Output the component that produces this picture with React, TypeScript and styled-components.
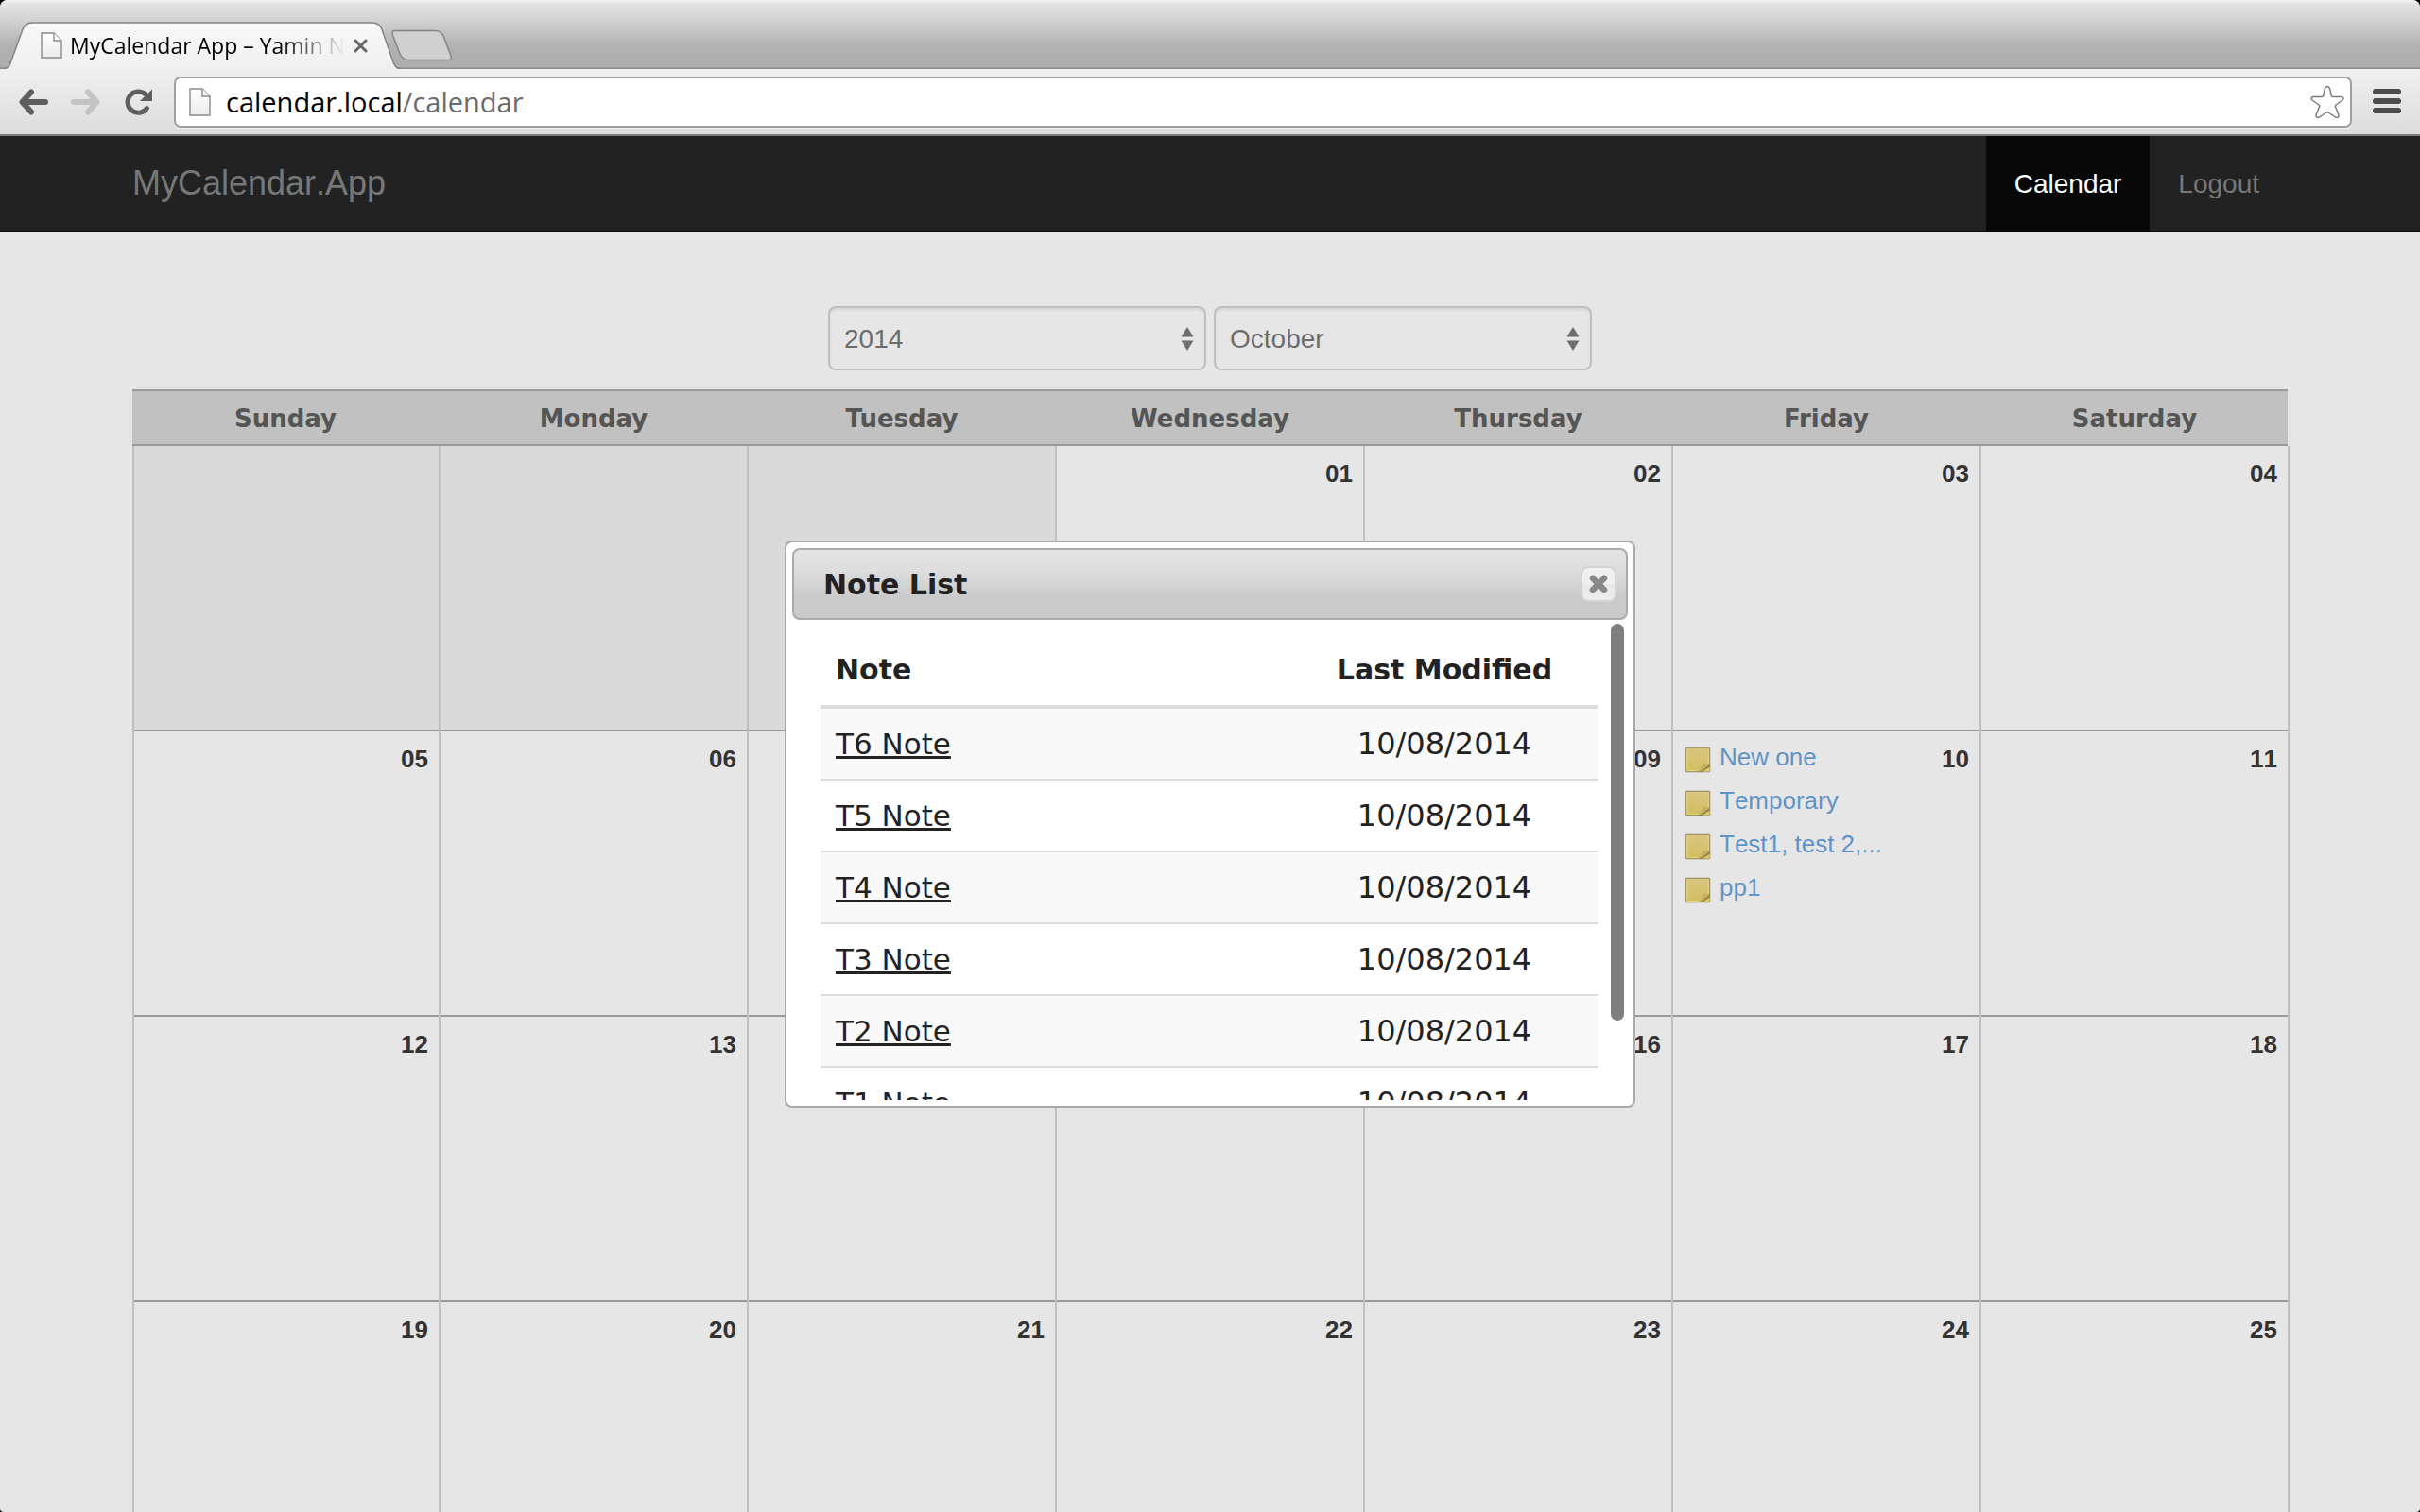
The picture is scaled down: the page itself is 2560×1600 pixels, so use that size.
import React from "react";
import styled, { createGlobalStyle } from "styled-components";

const GlobalStyle = createGlobalStyle`
  * { box-sizing: border-box; }
  html, body, #root { height: 100%; }
  body {
    margin: 0;
    background: #000;
    overflow: hidden;
    font-family: "Liberation Sans", Arial, sans-serif;
    font-kerning: none;
  }
  button, input, select { font: inherit; }
  a { color: inherit; }
`;

const uiFont = `"DejaVu Sans", Verdana, sans-serif`;
const chromeFont = `"Open Sans", "Noto Sans", sans-serif`;

const Window = styled.div`
  display: flex;
  flex-direction: column;
  height: 100vh;
  overflow: hidden;
  border-radius: 8px 8px 4px 4px;
  background: #e6e6e6;
`;

/* ---------- browser chrome ---------- */

const TabStrip = styled.div`
  display: flex;
  align-items: flex-end;
  height: 73px;
  flex: none;
  padding-left: 4px;
  background: linear-gradient(#f4f4f4 0, #e4e4e4 4px, #cfcfcf 24px, #b2b2b2 48px, #adadad 71px, #8c8c8c 72px);
`;

const Tab = styled.div`
  position: relative;
  display: flex;
  align-items: center;
  width: 420px;
  height: 50px;
  padding: 0 36px 0 39px;
`;

const TabShape = styled.svg`
  position: absolute;
  inset: 0;
`;

const TabTitle = styled.span`
  position: relative;
  flex: 1;
  margin: 0 9px 0 8px;
  white-space: nowrap;
  font: 23px/48px ${chromeFont};
  color: #000;
  mask-image: linear-gradient(90deg, #000 76%, transparent);
`;

const IconButton = styled.button`
  position: relative;
  display: flex;
  flex: none;
  padding: 0;
  border: 0;
  background: none;
`;

const NewTab = styled(IconButton)`
  align-self: flex-start;
  margin-left: -11px;
  padding-top: 31px;
`;

const Toolbar = styled.div`
  display: flex;
  align-items: center;
  flex: none;
  height: 71px;
  padding: 0 20px 0;
  background: linear-gradient(#f0f0f0, #dcdcdc);
  border-bottom: 2px solid #7d7d7d;
`;

const NavButtons = styled.div`
  display: flex;
  gap: 24px;
  margin-right: 22px;
`;

const AddressBar = styled.form`
  display: flex;
  align-items: center;
  flex: 1;
  height: 54px;
  padding: 0 6px 0 14px;
  border: 2px solid #a0a0a0;
  border-radius: 7px;
  background: #fff;
  box-shadow: 0 2px 0 rgba(255, 255, 255, 0.5);
`;

const Address = styled.a`
  flex: 1;
  margin-left: 16px;
  font: 29px/46px ${chromeFont};
  color: #6b6b6b;
  text-decoration: none;
`;

const Host = styled.span`
  color: #000;
`;

const MenuButton = styled(IconButton)`
  margin-left: 22px;
`;

/* ---------- page ---------- */

const Viewport = styled.main`
  position: relative;
  flex: 1;
  min-height: 0;
  overflow: hidden;
`;

const Navbar = styled.header`
  height: 102px;
  background: #222;
  border-bottom: 2px solid #080808;
`;

const Container = styled.div`
  display: flex;
  flex-direction: column;
  max-width: 2340px;
  height: 100%;
  margin: 0 auto;
  padding: 0 30px;
`;

const NavInner = styled(Container)`
  flex-direction: row;
  justify-content: space-between;
  height: 100px;
`;

const Brand = styled.a`
  font-size: 36px;
  line-height: 100px;
  color: #777;
  text-decoration: none;
`;

const NavLinks = styled.nav`
  display: flex;
`;

const NavLink = styled.a<{ $active?: boolean }>`
  padding: 0 30px;
  font-size: 28px;
  line-height: 102px;
  height: 100px;
  text-decoration: none;
  color: ${(p) => (p.$active ? "#fff" : "#777")};
  background: ${(p) => (p.$active ? "#080808" : "transparent")};
`;

const Filters = styled.div`
  display: flex;
  justify-content: center;
  gap: 8px;
  padding: 78px 0 20px;
`;

const SelectBox = styled.label`
  position: relative;
  width: 400px;
`;

const Select = styled.select`
  display: block;
  width: 100%;
  height: 68px;
  padding: 0 40px 0 15px;
  appearance: none;
  border: 2px solid #bfbfbf;
  border-radius: 8px;
  background: #e6e6e6;
  box-shadow: inset 0 2px 3px rgba(0, 0, 0, 0.07);
  font-size: 28px;
  color: #6c6c6c;
`;

const SelectArrows = styled.svg`
  position: absolute;
  top: 22px;
  right: 13px;
  pointer-events: none;
`;

const Calendar = styled.table`
  width: calc(100% + 2px);
  table-layout: fixed;
  border-collapse: separate;
  border-spacing: 0;
`;

const DayName = styled.th`
  height: 60px;
  padding: 2px 2px 0 0;
  background: #c1c1c1;
  background-clip: padding-box;
  box-shadow: inset 0 2px #999, inset 0 -2px #999;
  font: bold 26px/58px ${uiFont};
  color: #555;

  &:last-child {
    padding-right: 0;
    border-right: 2px solid transparent;
  }
`;

const Day = styled.td<{ $empty?: boolean }>`
  height: 302px;
  padding: 6px 11px 0 12px;
  vertical-align: top;
  background: ${(p) => (p.$empty ? "#dadada" : "#e6e6e6")};
  border-right: 2px solid #c0c0c0;
  box-shadow: inset 0 -2px #999;

  &:first-child { border-left: 2px solid #c0c0c0; }
`;

const DayInner = styled.div`
  display: flex;
  justify-content: space-between;
`;

const DayNumber = styled.span`
  margin-left: auto;
  font-weight: bold;
  font-size: 26px;
  line-height: 46px;
  color: #333;
`;

const NoteItems = styled.ul`
  margin: 0;
  padding: 0;
  list-style: none;
`;

const NoteItem = styled.li`
  height: 46px;
`;

const NoteLink = styled.a`
  display: flex;
  align-items: center;
  gap: 9px;
  font-size: 26px;
  line-height: 42px;
  color: #6094c6;
  text-decoration: none;

  svg { margin-top: 6px; }
`;

/* ---------- dialog ---------- */

const DialogLayer = styled.div`
  position: absolute;
  inset: 0;
  display: flex;
  align-items: center;
  justify-content: center;
`;

const Dialog = styled.section`
  display: flex;
  flex-direction: column;
  width: 900px;
  height: 600px;
  padding: 6px;
  border: 2px solid #aaa;
  border-radius: 8px;
  background: #fff;
  font-family: ${uiFont};
  color: #222;
`;

const DialogHeader = styled.header`
  display: flex;
  align-items: center;
  justify-content: space-between;
  flex: none;
  height: 76px;
  padding: 0 10px 0 31px;
  border: 2px solid #aaa;
  border-radius: 8px;
  background: linear-gradient(#e4e4e4 0, #dedede 30%, #cacaca 70%, #cbcbcb);
`;

const DialogTitle = styled.h2`
  margin: 0;
  padding-top: 2px;
  font-size: 30px;
  line-height: 70px;
`;

const CloseButton = styled.button`
  display: grid;
  place-items: center;
  width: 38px;
  height: 38px;
  padding: 0;
  border: 2px solid #d3d3d3;
  border-radius: 8px;
  background: linear-gradient(#f0f0f0 50%, #e8e8e8 50%, #ededed);
`;

const DialogBody = styled.div`
  position: relative;
  flex: 1;
  min-height: 0;
  overflow: hidden;
  padding: 14px 32px 0 30px;
`;

const ScrollThumb = styled.div`
  position: absolute;
  top: 4px;
  right: 4px;
  width: 14px;
  height: 420px;
  border-radius: 7px;
  background: #7f7f7f;
`;

const NoteTable = styled.table`
  width: 100%;
  table-layout: fixed;
  border-collapse: separate;
  border-spacing: 0;
`;

const HeadCell = styled.th<{ $center?: boolean }>`
  width: ${(p) => (p.$center ? "324px" : "auto")};
  padding: 2px 16px 0;
  border-bottom: 4px solid #ddd;
  font-size: 30px;
  line-height: 74px;
  text-align: ${(p) => (p.$center ? "center" : "left")};
`;

const NoteRow = styled.tr`
  &:nth-child(odd) { background: #f9f9f9; }
`;

const Cell = styled.td<{ $center?: boolean }>`
  padding: 0 16px;
  border-bottom: 2px solid #ddd;
  font-size: ${(p) => (p.$center ? "32px" : "31px")};
  line-height: 74px;
  text-align: ${(p) => (p.$center ? "center" : "left")};
`;

const PageSvg = styled.svg`
  position: relative;
  flex: none;
`;

const PageIcon = ({ h }: { h: number }) => (
  <PageSvg width="23" height={h} viewBox={`0 0 23 ${h}`}>
    <defs>
      <linearGradient id="paper" x1="0" y1="0" x2="0" y2="1">
        <stop offset="0" stopColor="#fff" />
        <stop offset="1" stopColor="#ececec" />
      </linearGradient>
    </defs>
    <path d={`M1 1H14L22 9V${h - 1}H1Z`} fill="url(#paper)" stroke="#8a8a8a" strokeWidth="1.4" />
    <path d="M14 1V9H22" fill="#fafafa" stroke="#8a8a8a" strokeWidth="1.4" />
  </PageSvg>
);

const Arrow = ({ color, flip }: { color: string; flip?: boolean }) => (
  <svg width="31" height="28" viewBox="0 0 31 28">
    <path
      d="M13 3.5L3.5 14L13 24.500M4 14H28"
      transform={flip ? "translate(31 0) scale(-1 1)" : undefined}
      fill="none"
      stroke={color}
      strokeWidth="6"
      strokeLinecap="round"
      strokeLinejoin="round"
    />
  </svg>
);

const NoteIcon = () => (
  <svg width="28" height="28" viewBox="0 0 28 28">
    <defs>
      <linearGradient id="sticky" x1="0" y1="0" x2="0" y2="1">
        <stop offset="0" stopColor="#d9c581" />
        <stop offset="1" stopColor="#d3bf5f" />
      </linearGradient>
    </defs>
    <rect x="0.500" y="0.500" width="27" height="27" rx="2" fill="#b9b296" />
    <rect x="1.500" y="1.500" width="25" height="25" fill="url(#sticky)" stroke="#a3976a" />
    <path d="M3 25.500V3M25.500 3V18M3 25.500H14" stroke="#e6d673" fill="none" />
    <path d="M14 26.500C18 25.500 23 22.500 26.500 18V22L19 26.500Z" fill="#94834a" />
    <path d="M15 25Q20 22 20 17Q23 20 26 17.500Q23 22 15 25Z" fill="#c0ac58" />
    <path d="M19 26.500L26.500 22V26.500Z" fill="#dccb6a" />
  </svg>
);

const dayNames = ["Sunday", "Monday", "Tuesday", "Wednesday", "Thursday", "Friday", "Saturday"];
const leadingBlanks = 3;
const weeks = [0, 1, 2, 3].map((w) => dayNames.map((_, d) => w * 7 + d - leadingBlanks + 1));
const dayNotes: Record<number, string[]> = { 10: ["New one", "Temporary", "Test1, test 2,...", "pp1"] };
const noteList = ["T6 Note", "T5 Note", "T4 Note", "T3 Note", "T2 Note", "T1 Note"];
const months = ["January", "February", "March", "April", "May", "June", "July", "August", "September", "October", "November", "December"];

const Picker = ({ label, value, options }: { label: string; value: string; options: string[] }) => (
  <SelectBox>
    <Select aria-label={label} defaultValue={value}>
      {options.map((o) => (
        <option key={o}>{o}</option>
      ))}
    </Select>
    <SelectArrows width="14" height="25" viewBox="0 0 14 25">
      <path d="M7 0L13.500 10.500H0.500ZM7 25L13.500 14.500H0.500Z" fill="#6e6e6e" />
    </SelectArrows>
  </SelectBox>
);

export default function App() {
  return (
    <Window>
      <GlobalStyle />
      <TabStrip>
        <Tab>
          <TabShape width="420" height="50" viewBox="0 0 420 50">
            <defs>
              <linearGradient id="tab" x1="0" y1="0" x2="0" y2="1">
                <stop offset="0" stopColor="#f8f8f8" />
                <stop offset="1" stopColor="#f0f0f0" />
              </linearGradient>
            </defs>
            <path
              d="M0 49.500C4 49.500 6 47 7 44L20 8C22 3 25 1 30 1H390C395 1 398 3 400 8L412 43C414 47 415 49.500 420 49.500V51H0Z"
              fill="url(#tab)"
            />
            <path
              d="M0 49.500C4 49.500 6 47 7 44L20 8C22 3 25 1 30 1H390C395 1 398 3 400 8L412 43C414 47 415 49.500 420 49.500"
              fill="none"
              stroke="#858585"
              strokeWidth="1.500"
            />
          </TabShape>
          <PageIcon h={28} />
          <TabTitle>MyCalendar App – Yamin N</TabTitle>
          <IconButton aria-label="Close tab">
            <svg width="15" height="15" viewBox="0 0 15 15">
              <path d="M2 2L13 13M13 2L2 13" stroke="#666" strokeWidth="3" strokeLinecap="round" />
            </svg>
          </IconButton>
        </Tab>
        <NewTab aria-label="New tab">
          <svg width="66" height="34" viewBox="0 0 66 34">
            <path
              d="M5 1.500H47C52 1.500 54 3 56 7L64 28C65 31 64 32.500 61 32.500H20C15 32.500 12 31 10 26L2 5C1.500 3 2 1.500 5 1.500Z"
              fill="#d0d0d0"
              stroke="#858585"
              strokeWidth="1.500"
            />
          </svg>
        </NewTab>
      </TabStrip>

      <Toolbar>
        <NavButtons>
          <IconButton aria-label="Back"><Arrow color="#5f5f5f" /></IconButton>
          <IconButton aria-label="Forward"><Arrow color="#c3c3c3" flip /></IconButton>
          <IconButton aria-label="Reload">
            <svg width="32" height="28" viewBox="0 0 32 28">
              <path d="M25.500 20.500A11.200 11.200 0 1 1 24 6" fill="none" stroke="#5f5f5f" strokeWidth="5" strokeLinecap="round" />
              <path d="M31 0.500V13H18Z" fill="#5f5f5f" />
            </svg>
          </IconButton>
        </NavButtons>
        <AddressBar>
          <PageIcon h={30} />
          <Address href="#"><Host>calendar.local</Host>/calendar</Address>
          <IconButton type="button" aria-label="Bookmark this page">
            <svg width="36" height="36" viewBox="0 0 36 36">
              <path
                d="M15.500 3.500Q18 -0.500 20.500 3.500L22.500 12Q23 12.500 24 12.500L33 12.500Q36.500 13.500 34 16L27 21Q26 22 26.500 23L30 31.500Q30 35.500 26.500 34L19 29Q18 28.500 17 29L9.500 34Q6 35.500 6 31.500L9.500 23Q10 22 9 21L2 16Q-0.500 13.500 3 12.500L12 12.500Q13 12.500 13.500 12Z"
                fill="#fff"
                stroke="#7c7c7c"
                strokeWidth="1.500"
                strokeLinejoin="round"
              />
            </svg>
          </IconButton>
        </AddressBar>
        <MenuButton aria-label="Menu">
          <svg width="30" height="27" viewBox="0 0 30 27">
            <rect y="0" width="30" height="6" rx="3" fill="#4c4c4c" />
            <rect y="10" width="30" height="6" rx="3" fill="#4c4c4c" />
            <rect y="20" width="30" height="6" rx="3" fill="#4c4c4c" />
          </svg>
        </MenuButton>
      </Toolbar>

      <Viewport>
        <Navbar>
          <NavInner>
            <Brand href="#">MyCalendar.App</Brand>
            <NavLinks>
              <NavLink href="#" $active>Calendar</NavLink>
              <NavLink href="#">Logout</NavLink>
            </NavLinks>
          </NavInner>
        </Navbar>
        <Container>
          <Filters>
            <Picker label="Year" value="2014" options={["2013", "2014", "2015"]} />
            <Picker label="Month" value="October" options={months} />
          </Filters>
          <Calendar>
            <thead>
              <tr>{dayNames.map((n) => <DayName key={n}>{n}</DayName>)}</tr>
            </thead>
            <tbody>
              {weeks.map((week, w) => (
                <tr key={w}>
                  {week.map((day, d) => (
                    <Day key={d} $empty={day < 1}>
                      {day >= 1 && (
                        <DayInner>
                          {dayNotes[day] && (
                            <NoteItems>
                              {dayNotes[day].map((n) => (
                                <NoteItem key={n}>
                                  <NoteLink href="#"><NoteIcon />{n}</NoteLink>
                                </NoteItem>
                              ))}
                            </NoteItems>
                          )}
                          <DayNumber>{String(day).padStart(2, "0")}</DayNumber>
                        </DayInner>
                      )}
                    </Day>
                  ))}
                </tr>
              ))}
            </tbody>
          </Calendar>
        </Container>

        <DialogLayer>
          <Dialog role="dialog" aria-labelledby="note-list-title">
            <DialogHeader>
              <DialogTitle id="note-list-title">Note List</DialogTitle>
              <CloseButton aria-label="Close">
                <svg width="20" height="20" viewBox="0 0 20 20">
                  <path d="M4 4L16 16M16 4L4 16" stroke="#888" strokeWidth="6.500" strokeLinecap="round" />
                </svg>
              </CloseButton>
            </DialogHeader>
            <DialogBody>
              <NoteTable>
                <thead>
                  <tr>
                    <HeadCell>Note</HeadCell>
                    <HeadCell $center>Last Modified</HeadCell>
                  </tr>
                </thead>
                <tbody>
                  {noteList.map((n) => (
                    <NoteRow key={n}>
                      <Cell><a href="#">{n}</a></Cell>
                      <Cell $center>10/08/2014</Cell>
                    </NoteRow>
                  ))}
                </tbody>
              </NoteTable>
              <ScrollThumb />
            </DialogBody>
          </Dialog>
        </DialogLayer>
      </Viewport>
    </Window>
  );
}
